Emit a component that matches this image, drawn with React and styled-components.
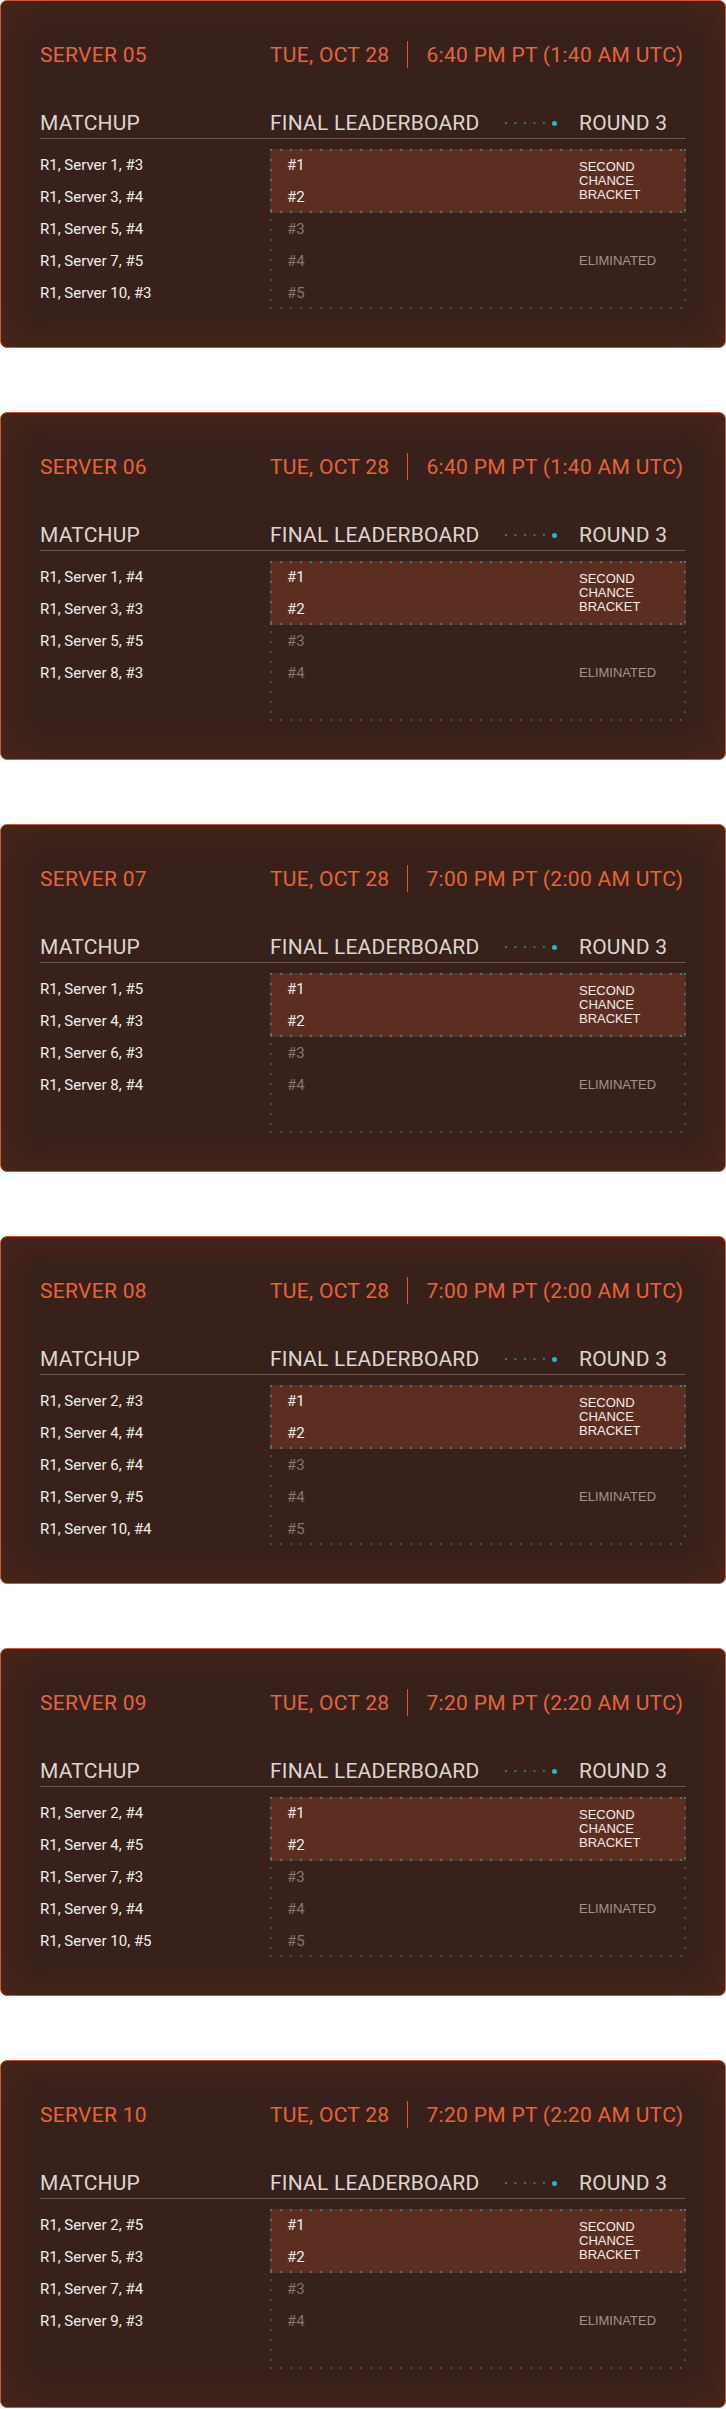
import React from 'react'
import styled, { createGlobalStyle } from 'styled-components'

const GlobalStyle = createGlobalStyle`
  body {
    margin: 0;
    background: #ffffff;
  }
`

const dots = (c) => `
  background-image:
    linear-gradient(to right, ${c} 2px, transparent 2px),
    linear-gradient(to right, ${c} 2px, transparent 2px),
    linear-gradient(to bottom, ${c} 2px, transparent 2px),
    linear-gradient(to bottom, ${c} 2px, transparent 2px);
  background-size: 10px 2px, 10px 2px, 2px 10px, 2px 10px;
  background-position: 0 0, 0 100%, 0 0, 100% 0;
  background-repeat: repeat-x, repeat-x, repeat-y, repeat-y;
`

const Page = styled.div`
  display: flex;
  flex-direction: column;
  gap: 64px;
`

const Card = styled.section`
  box-sizing: border-box;
  height: 348px;
  padding: 40px 39px 0 39px;
  border: 1px solid #cc5632;
  border-radius: 7px;
  background: #38211b;
  box-shadow: inset 0 0 36px rgba(92, 42, 26, 0.7);
`

const TitleRow = styled.div`
  display: grid;
  grid-template-columns: 230px 1fr;
  align-items: center;
  height: 27px;
  font-family: Roboto, "Liberation Sans", sans-serif;
  font-size: 21px;
  line-height: 24px;
  color: #e5643b;
  letter-spacing: 0.3px;
`

const When = styled.div`
  display: flex;
  align-items: center;
  gap: 18px;
`

const Divider = styled.span`
  width: 1px;
  height: 27px;
  background: #d55a33;
`

const HeaderRow = styled.div`
  display: grid;
  grid-template-columns: 230px 1fr 107px;
  align-items: center;
  margin-top: 43px;
  padding-bottom: 3px;
  border-bottom: 1px solid #6c5249;
  font-family: Roboto, "Liberation Sans", sans-serif;
  font-size: 21px;
  line-height: 24px;
  color: #dcd5d0;
  letter-spacing: 0.2px;
`

const Board = styled.div`
  display: flex;
  align-items: center;
`

const Connector = styled.span`
  display: flex;
  align-items: center;
  margin-left: auto;
  margin-right: 22px;
  width: 52px;
  height: 5px;
  background-image: linear-gradient(to right, #2b7780 2px, transparent 2px);
  background-size: 9.5px 2px;
  background-repeat: repeat-x;
  background-position: 0 50%;
  &::after {
    content: '';
    margin-left: auto;
    width: 5px;
    height: 5px;
    border-radius: 50%;
    background: #23b6cc;
  }
`

const Body = styled.div`
  display: grid;
  grid-template-columns: 230px 1fr;
  margin-top: 10px;
`

const Matchups = styled.div`
  display: flex;
  flex-direction: column;
`

const Row = styled.div`
  height: 32px;
  display: flex;
  align-items: center;
  font-family: Roboto, "Liberation Sans", sans-serif;
  font-size: 15px;
  color: ${(p) => (p.$dim ? '#85766f' : '#f3efeb')};
`

const Box = styled.div`
  display: flex;
  flex-direction: column;
  height: 160px;
  ${dots('#4d4a46')}
`

const Group = styled.div`
  display: grid;
  grid-template-columns: 1fr 107px;
  align-items: center;
  padding-left: 17px;
  ${(p) => (p.$hot ? dots('#3c7a7c') : '')}
  background-color: ${(p) => (p.$hot ? '#5c2d21' : 'transparent')};
`

const Ranks = styled.div`
  display: flex;
  flex-direction: column;
`

const Status = styled.div`
  font-family: "Liberation Sans", Arial, sans-serif;
  font-size: 13px;
  line-height: 14px;
  text-transform: uppercase;
  color: ${(p) => (p.$hot ? '#f2ece8' : '#a0938e')};
`

const cards = [
  { server: '05', time: '6:40 PM PT (1:40 AM UTC)', matchups: ['R1, Server 1, #3', 'R1, Server 3, #4', 'R1, Server 5, #4', 'R1, Server 7, #5', 'R1, Server 10, #3'] },
  { server: '06', time: '6:40 PM PT (1:40 AM UTC)', matchups: ['R1, Server 1, #4', 'R1, Server 3, #3', 'R1, Server 5, #5', 'R1, Server 8, #3'] },
  { server: '07', time: '7:00 PM PT (2:00 AM UTC)', matchups: ['R1, Server 1, #5', 'R1, Server 4, #3', 'R1, Server 6, #3', 'R1, Server 8, #4'] },
  { server: '08', time: '7:00 PM PT (2:00 AM UTC)', matchups: ['R1, Server 2, #3', 'R1, Server 4, #4', 'R1, Server 6, #4', 'R1, Server 9, #5', 'R1, Server 10, #4'] },
  { server: '09', time: '7:20 PM PT (2:20 AM UTC)', matchups: ['R1, Server 2, #4', 'R1, Server 4, #5', 'R1, Server 7, #3', 'R1, Server 9, #4', 'R1, Server 10, #5'] },
  { server: '10', time: '7:20 PM PT (2:20 AM UTC)', matchups: ['R1, Server 2, #5', 'R1, Server 5, #3', 'R1, Server 7, #4', 'R1, Server 9, #3'] },
]

const rank = (n, count) => (n <= count ? `#${n}` : '')

function ServerCard({ server, time, matchups }) {
  const n = matchups.length
  return (
    <Card>
      <TitleRow>
        <span>SERVER {server}</span>
        <When>
          <span>TUE, OCT 28</span>
          <Divider />
          <span>{time}</span>
        </When>
      </TitleRow>
      <HeaderRow>
        <span>MATCHUP</span>
        <Board>
          FINAL LEADERBOARD
          <Connector />
        </Board>
        <span>ROUND 3</span>
      </HeaderRow>
      <Body>
        <Matchups>
          {matchups.map((m) => (
            <Row key={m}>{m}</Row>
          ))}
        </Matchups>
        <Box>
          <Group $hot>
            <Ranks>
              <Row>{rank(1, n)}</Row>
              <Row>{rank(2, n)}</Row>
            </Ranks>
            <Status $hot>
              Second<br />Chance<br />Bracket
            </Status>
          </Group>
          <Group>
            <Ranks>
              <Row $dim>{rank(3, n)}</Row>
              <Row $dim>{rank(4, n)}</Row>
              <Row $dim>{rank(5, n)}</Row>
            </Ranks>
            <Status>Eliminated</Status>
          </Group>
        </Box>
      </Body>
    </Card>
  )
}

export default function App() {
  return (
    <Page>
      <GlobalStyle />
      {cards.map((c) => (
        <ServerCard key={c.server} {...c} />
      ))}
    </Page>
  )
}
